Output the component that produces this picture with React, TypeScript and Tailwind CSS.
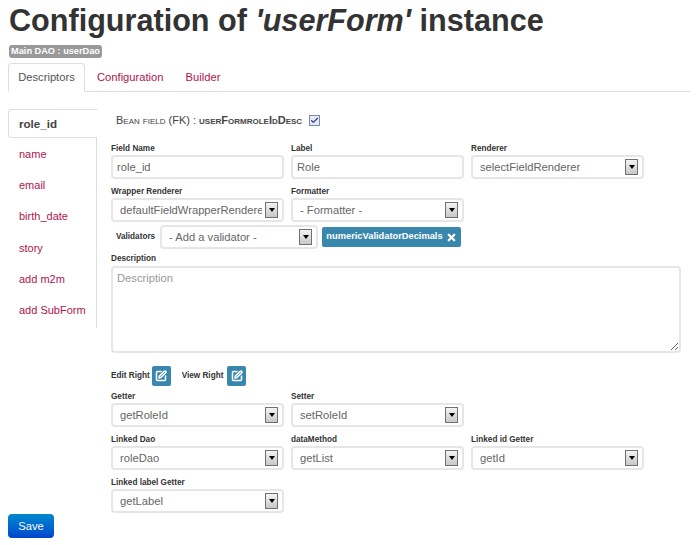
import { Check, SquarePen, X } from "lucide-react";

const sideItems = ["name", "email", "birth_date", "story", "add m2m", "add SubForm"];

function FieldLabel({ text }: { text: string }) {
  return <label className="block h-[15px] text-[8.2px] leading-[17px] font-bold text-[#333]">{text}</label>;
}

function TextBox({ value }: { value: string }) {
  return (
    <div className="flex h-[24px] w-[173px] items-center rounded-[4px] border-2 border-[#e6e6e6] pl-[4px] text-[11.2px] text-[#666]">
      {value}
    </div>
  );
}

function Arrow() {
  return (
    <span className="flex h-[16px] w-[13px] shrink-0 items-center justify-center border border-[#707070] bg-gradient-to-b from-[#f4f4f4] to-[#c8c8c8]">
      <span className="h-0 w-0 border-x-[3px] border-t-[4px] border-x-transparent border-t-black" />
    </span>
  );
}

function SelectBox({ value, w = "w-[173px]" }: { value: string; w?: string }) {
  return (
    <div className={`flex h-[24px] items-center justify-between gap-[3px] rounded-[4px] border-2 border-[#e6e6e6] pl-[7px] pr-[4px] text-[11.2px] text-[#666] ${w}`}>
      <span className="overflow-hidden whitespace-nowrap">{value}</span>
      <Arrow />
    </div>
  );
}

function Field({ label, children }: { label: string; children: React.ReactNode }) {
  return (
    <div className="w-[173px]">
      <FieldLabel text={label} />
      {children}
    </div>
  );
}

function RightButton() {
  return (
    <span className="flex h-[20px] w-[19px] items-center justify-center rounded-[2px] bg-[#3a87ad] text-white">
      <SquarePen size={12} strokeWidth={3} />
    </span>
  );
}

export default function App() {
  return (
    <div className="h-[545px] w-[700px] overflow-hidden bg-white pl-[8px] pr-[10px] font-['Liberation_Sans',Arial,sans-serif]">
      <h1 className="h-[45px] pl-px text-[30.6px] leading-[40px] font-bold text-[#333]">
        Configuration of <em>'userForm'</em> instance
      </h1>
      <span className="ml-px block h-[13px] w-[93px] rounded-[3px] bg-[#999] text-center text-[9.2px] leading-[13px] font-bold text-white">
        Main DAO : userDao
      </span>

      <div className="mt-[5px] flex h-[29px] border-b border-[#ddd] text-[11.2px]">
        <div className="flex h-[29px] w-[77px] items-center justify-center rounded-t-[4px] border border-[#ddd] border-b-white text-[#555]">
          Descriptors
        </div>
        <div className="flex items-center px-[12px] text-[#b0144e]">Configuration</div>
        <div className="flex items-center pl-[10px] text-[#b0144e]">Builder</div>
      </div>

      <div className="mt-[17px] flex">
        <div className="w-[89px] shrink-0">
          <div className="flex h-[29px] items-center rounded-l-[4px] border border-r-0 border-[#ddd] pl-[10px] text-[11.6px] font-bold text-[#444]">
            role_id
          </div>
          <ul className="h-[190px] border-r border-[#ddd] pt-[0.5px] text-[11px] text-[#b0144e]">
            {sideItems.map((item) => (
              <li key={item} className="flex h-[31.3px] items-center pl-[11px]">
                {item}
              </li>
            ))}
          </ul>
        </div>

        <div className="ml-[14px] flex-1">
          <div className="mb-[9px] flex h-[22px] items-center pl-[5px] text-[#444]">
            <span className="text-[11px] [font-variant:small-caps]">Bean field (FK) : </span>
            <span className="ml-[3px] text-[11px] font-bold [font-variant:small-caps]">userFormroleIdDesc</span>
            <span className="ml-[7px] flex h-[11px] w-[11px] items-center justify-center border border-[#7a8aa8] bg-[#e6e9f2] text-[#2a3f80]">
              <Check size={9} strokeWidth={3} />
            </span>
          </div>

          <div className="flex gap-[7px]">
            <Field label="Field Name"><TextBox value="role_id" /></Field>
            <Field label="Label"><TextBox value="Role" /></Field>
            <Field label="Renderer"><SelectBox value="selectFieldRenderer" /></Field>
          </div>

          <div className="mt-[4px] flex gap-[7px]">
            <Field label="Wrapper Renderer"><SelectBox value="defaultFieldWrapperRenderer" /></Field>
            <Field label="Formatter"><SelectBox value="- Formatter -" /></Field>
          </div>

          <div className="mt-[3px] flex h-[24px] items-center">
            <span className="ml-[5px] w-[44px] text-[8.2px] font-bold text-[#333]">Validators</span>
            <SelectBox value="- Add a validator -" w="w-[158px]" />
            <span className="ml-[4px] flex h-[20px] w-[139px] items-center justify-center gap-[3px] rounded-[2px] bg-[#3a87ad] text-[9.3px] font-bold text-white">
              numericValidatorDecimals
              <X size={11} strokeWidth={5} />
            </span>
          </div>

          <div className="mt-[2px] w-[570px]">
            <label className="block h-[15px] text-[8.2px] leading-[15px] font-bold text-[#333]">Description</label>
            <textarea
              readOnly
              placeholder="Description"
              className="block h-[87px] w-full rounded-[4px] border-2 border-[#e6e6e6] pl-[4px] pt-[2px] text-[11.2px] placeholder:text-[#999] focus:outline-none"
            />
          </div>

          <div className="mt-[13px] flex h-[20px] items-center text-[8.2px] font-bold text-[#333]">
            <span className="mr-[2px]">Edit Right</span>
            <RightButton />
            <span className="ml-[11px] mr-[4px]">View Right</span>
            <RightButton />
          </div>

          <div className="mt-[2px] flex gap-[7px]">
            <Field label="Getter"><SelectBox value="getRoleId" /></Field>
            <Field label="Setter"><SelectBox value="setRoleId" /></Field>
          </div>

          <div className="mt-[4px] flex gap-[7px]">
            <Field label="Linked Dao"><SelectBox value="roleDao" /></Field>
            <Field label="dataMethod"><SelectBox value="getList" /></Field>
            <Field label="Linked id Getter"><SelectBox value="getId" /></Field>
          </div>

          <div className="mt-[4px]">
            <Field label="Linked label Getter"><SelectBox value="getLabel" /></Field>
          </div>
        </div>
      </div>

      <button className="mt-px flex h-[24px] w-[46px] items-center justify-center rounded-[4px] bg-gradient-to-b from-[#0088cc] to-[#0044cc] text-[11.2px] text-white">
        Save
      </button>
    </div>
  );
}
